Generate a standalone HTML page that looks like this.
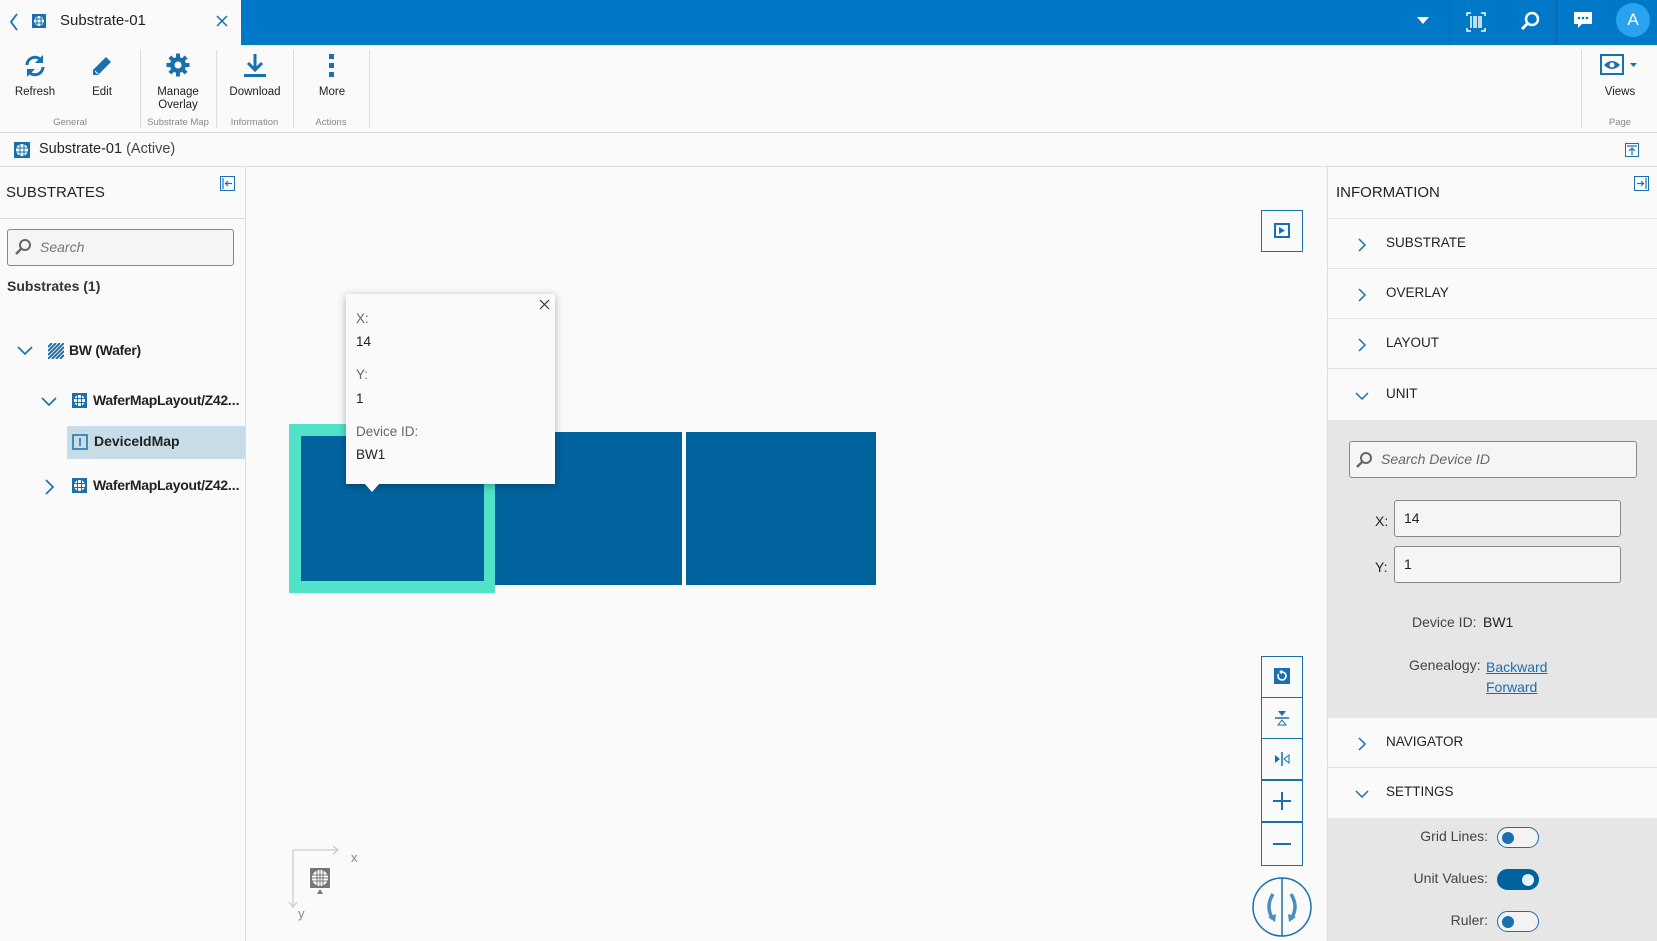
<!DOCTYPE html>
<html><head><meta charset="utf-8">
<style>
*{box-sizing:border-box;margin:0;padding:0}
body{width:1657px;height:941px;overflow:hidden;background:#fafafa;font-family:"Liberation Sans",sans-serif;color:#222;position:relative;font-size:14px}
.a{position:absolute}
.top{left:0;top:0;width:1657px;height:45px;background:#0078c8}
.tab{left:0;top:0;width:241px;height:45px;background:#fafafa}
.tb{left:0;top:45px;width:1657px;height:88px;background:#fafafa;border-bottom:1px solid #ddd}
.lbl{font-size:11.5px;color:#222;text-align:center;width:70px}
.grp{font-size:9.5px;color:#888;text-align:center}
.sep{width:1px;background:#ddd;top:50px;height:78px}
.ic{fill:#1a6fad}
.hdr{font-size:15px;color:#222}
.row{left:1327px;width:330px;height:50px;border-bottom:1px solid #e3e3e3}
.row span{position:absolute;left:59px;top:16px;font-size:13.5px;color:#222}
.row svg{position:absolute;left:30px;top:18px}
.gray{background:#e6e6e6}
.inp{background:#f5f5f5;border:1px solid #888;border-radius:3px}
.tog{width:42px;height:21px;border-radius:11px;border:1.5px solid #1a6fad;background:#f3f3f3}
.tog i{position:absolute;left:4px;top:3.5px;width:12px;height:12px;border-radius:50%;background:#1a6fad}
.tog.on{background:#00639e;border-color:#00639e}
.tog.on i{left:24px;background:#e8f4ff}
.cb{left:1261px;width:42px;height:42px;border:1.5px solid #1a6fad;background:#fafafa}
</style></head><body>
<div class="a top"></div>
<div class="a tab"></div>
<svg class="a" style="left:8px;top:12px" width="12" height="20"><path d="M9 2 L3 10 L9 18" stroke="#1a6fad" stroke-width="1.8" fill="none"/></svg>
<svg class="a" style="left:32px;top:14px" width="14" height="14"><rect width="14" height="14" fill="#1a6fad"/><circle cx="7" cy="7" r="5" fill="#fff"/><path d="M2 5h10M2 9h10M5 2v10M9 2v10" stroke="#1a6fad" stroke-width="1"/></svg>
<div class="a" style="left:60px;top:12px;font-size:15px">Substrate-01</div>
<svg class="a" style="left:216px;top:15px" width="12" height="12"><path d="M1 1L11 11M11 1L1 11" stroke="#1a6fad" stroke-width="1.5"/></svg>
<svg class="a" style="left:1417px;top:17px" width="12" height="8"><path d="M0 0h12L6 7z" fill="#fff"/></svg>
<div class="a" style="left:1449px;top:0;width:1px;height:45px;background:#0a66a8"></div>
<div class="a" style="left:1556px;top:0;width:1px;height:45px;background:#0a66a8"></div>
<svg class="a" style="left:1466px;top:12px" width="20" height="20"><path d="M1 4V1h4M15 1h4v3M1 16v3h4M15 19h4v-3" stroke="#fff" stroke-width="1.5" fill="none"/><path d="M5 4v12M8 4v12M10 4v12M13 4v12M15 4v12" stroke="#fff" stroke-width="1.5"/></svg>
<svg class="a" style="left:1519px;top:10px" width="22" height="22"><circle cx="13" cy="9" r="6" stroke="#fff" stroke-width="2.5" fill="none"/><path d="M9 13L3 19" stroke="#fff" stroke-width="3"/></svg>
<svg class="a" style="left:1573px;top:11px" width="20" height="20"><path d="M1 1h18v12H9l-4 4v-4H1z" fill="#fff"/><circle cx="6" cy="7" r="1.3" fill="#0078c8"/><circle cx="10" cy="7" r="1.3" fill="#0078c8"/><circle cx="14" cy="7" r="1.3" fill="#0078c8"/></svg>
<div class="a" style="left:1616px;top:3px;width:34px;height:34px;border-radius:50%;background:#29a3f0;color:#fff;font-size:17px;text-align:center;line-height:34px">A</div>

<div class="a tb"></div>
<!-- toolbar icons -->
<svg class="a" style="left:23px;top:54px" width="24" height="24" viewBox="0 0 24 24"><path d="M4 11a8 8 0 0 1 14-5" stroke="#1a6fad" stroke-width="3" fill="none"/><path d="M20 1v8h-8z" fill="#1a6fad"/><path d="M20 13a8 8 0 0 1-14 5" stroke="#1a6fad" stroke-width="3" fill="none"/><path d="M4 23v-8h8z" fill="#1a6fad"/></svg>
<svg class="a" style="left:90px;top:54px" width="24" height="24"><path d="M3 16L16 3l5 5L8 21H3z" fill="#1a6fad"/><path d="M5 17l3 3" stroke="#fff" stroke-width="1"/></svg>
<svg class="a" style="left:166px;top:53px" width="24" height="24" viewBox="0 0 24 24"><g fill="#1a6fad"><circle cx="12" cy="12" r="8"/><rect x="10" y="0.5" width="4" height="23"/><rect x="0.5" y="10" width="23" height="4"/><rect x="10" y="0.5" width="4" height="23" transform="rotate(45 12 12)"/><rect x="10" y="0.5" width="4" height="23" transform="rotate(-45 12 12)"/></g><circle cx="12" cy="12" r="3.5" fill="#fafafa"/></svg>
<svg class="a" style="left:243px;top:53px" width="24" height="26"><path d="M12 1v15" stroke="#1a6fad" stroke-width="3"/><path d="M5 10l7 7 7-7" stroke="#1a6fad" stroke-width="3" fill="none"/><rect x="1" y="21" width="22" height="3" fill="#1a6fad"/></svg>
<svg class="a" style="left:326px;top:54px" width="12" height="24"><rect x="3" y="0" width="5" height="5" fill="#1a6fad"/><rect x="3" y="9" width="5" height="5" fill="#1a6fad"/><rect x="3" y="18" width="5" height="5" fill="#1a6fad"/></svg>
<div class="a lbl" style="left:0;top:86px">Refresh</div>
<div class="a lbl" style="left:67px;top:86px">Edit</div>
<div class="a lbl" style="left:143px;top:86px;line-height:13px">Manage<br>Overlay</div>
<div class="a lbl" style="left:220px;top:86px">Download</div>
<div class="a lbl" style="left:297px;top:86px">More</div>
<div class="a grp" style="left:0;top:117px;width:140px">General</div>
<div class="a grp" style="left:140px;top:117px;width:76px">Substrate Map</div>
<div class="a grp" style="left:216px;top:117px;width:77px">Information</div>
<div class="a grp" style="left:293px;top:117px;width:76px">Actions</div>
<div class="a sep" style="left:140px"></div><div class="a sep" style="left:216px"></div><div class="a sep" style="left:293px"></div><div class="a sep" style="left:369px"></div><div class="a sep" style="left:1581px"></div>
<svg class="a" style="left:1600px;top:54px" width="40" height="22"><rect x="1" y="1" width="22" height="19" fill="none" stroke="#1a6fad" stroke-width="2"/><path d="M4 11q8-8 16 0q-8 8-16 0z" fill="#1a6fad"/><circle cx="12" cy="11" r="2.5" fill="#fff"/><path d="M30 9h7l-3.5 4z" fill="#1a6fad"/></svg>
<div class="a lbl" style="left:1585px;top:86px">Views</div>
<div class="a grp" style="left:1585px;top:117px;width:70px">Page</div>

<!-- breadcrumb -->
<svg class="a" style="left:14px;top:142px" width="16" height="16"><rect width="16" height="16" fill="#1a6fad"/><circle cx="8" cy="8" r="6" fill="#fff"/><path d="M2 6h12M2 10h12M6 2v12M10 2v12" stroke="#1a6fad" stroke-width="1"/></svg>
<div class="a" style="left:39px;top:141px;font-size:14.5px">Substrate-01 <span style="color:#444">(Active)</span></div>
<svg class="a" style="left:1625px;top:143px" width="14" height="14"><rect x=".5" y=".5" width="13" height="13" fill="#fff" stroke="#1a6fad"/><path d="M2 3h10M7 12V5M4 8l3-3 3 3" stroke="#1a6fad" stroke-width="1.2" fill="none"/></svg>
<div class="a" style="left:0;top:166px;width:1657px;height:1px;background:#ddd"></div>

<!-- left panel -->
<div class="a" style="left:245px;top:167px;width:1px;height:774px;background:#ddd"></div>
<div class="a hdr" style="left:6px;top:184px">SUBSTRATES</div>
<svg class="a" style="left:220px;top:176px" width="15" height="15"><rect x=".5" y=".5" width="14" height="14" fill="#fff" stroke="#1a6fad"/><path d="M3 2v11M12 7.5H6M8 5L5.5 7.5 8 10" stroke="#1a6fad" stroke-width="1.2" fill="none"/></svg>
<div class="a" style="left:0;top:218px;width:245px;height:1px;background:#ddd"></div>
<div class="a inp" style="left:7px;top:229px;width:227px;height:37px"></div>
<svg class="a" style="left:14px;top:238px" width="18" height="18"><circle cx="11" cy="7" r="5" stroke="#666" stroke-width="2" fill="none"/><path d="M7 11L2 16" stroke="#666" stroke-width="2.5"/></svg>
<div class="a" style="left:40px;top:239px;font-style:italic;color:#777;font-size:14px">Search</div>
<div class="a" style="left:7px;top:278px;font-weight:bold;color:#333;font-size:14px">Substrates (1)</div>
<svg class="a" style="left:17px;top:346px" width="16" height="10"><path d="M1 1l7 7 7-7" stroke="#1a6fad" stroke-width="1.6" fill="none"/></svg>
<svg class="a" style="left:48px;top:343px" width="16" height="16"><rect width="16" height="16" fill="#fff"/><path d="M0 4L4 0M0 8L8 0M0 12L12 0M0 16L16 0M4 16L16 4M8 16L16 8M12 16L16 12" stroke="#1a6fad" stroke-width="2"/></svg>
<div class="a" style="left:69px;top:342px;font-weight:bold;font-size:14px;letter-spacing:-.3px">BW (Wafer)</div>
<svg class="a" style="left:41px;top:397px" width="16" height="10"><path d="M1 1l7 7 7-7" stroke="#1a6fad" stroke-width="1.6" fill="none"/></svg>
<svg class="a" style="left:72px;top:393px" width="15" height="15"><rect width="15" height="15" fill="#1a6fad"/><circle cx="7.5" cy="7.5" r="5.5" fill="#fff"/><path d="M2 5.5h11M2 9.5h11M5.5 2v11M9.5 2v11" stroke="#1a6fad" stroke-width="1"/></svg>
<div class="a" style="left:93px;top:392px;font-weight:bold;font-size:14px;letter-spacing:-.3px">WaferMapLayout/Z42<span style="letter-spacing:0">...</span></div>
<div class="a" style="left:67px;top:426px;width:178px;height:33px;background:#c8dce8"></div>
<svg class="a" style="left:72px;top:434px" width="16" height="16"><rect x="1" y="1" width="14" height="14" fill="none" stroke="#1a6fad" stroke-width="1.5"/><path d="M8 4v8" stroke="#1a6fad" stroke-width="1.5"/></svg>
<div class="a" style="left:94px;top:433px;font-weight:bold;font-size:14px">DeviceIdMap</div>
<svg class="a" style="left:45px;top:479px" width="10" height="16"><path d="M1 1l7 7-7 7" stroke="#1a6fad" stroke-width="1.6" fill="none"/></svg>
<svg class="a" style="left:72px;top:478px" width="15" height="15"><rect width="15" height="15" fill="#1a6fad"/><circle cx="7.5" cy="7.5" r="5.5" fill="#fff"/><path d="M2 5.5h11M2 9.5h11M5.5 2v11M9.5 2v11" stroke="#1a6fad" stroke-width="1"/></svg>
<div class="a" style="left:93px;top:477px;font-weight:bold;font-size:14px;letter-spacing:-.3px">WaferMapLayout/Z42<span style="letter-spacing:0">...</span></div>

<!-- map -->
<div class="a" style="left:289px;top:424px;width:206px;height:169px;background:#50e3c8"></div>
<div class="a" style="left:301px;top:436px;width:183px;height:145px;background:#00639e"></div>
<div class="a" style="left:495px;top:432px;width:187px;height:153px;background:#00639e"></div>
<div class="a" style="left:686px;top:432px;width:190px;height:153px;background:#00639e"></div>
<div class="a" style="left:346px;top:294px;width:209px;height:190px;background:#fafafa;box-shadow:0 2px 8px rgba(0,0,0,.3)"></div>
<div class="a" style="left:364px;top:483px;width:0;height:0;border-left:8px solid transparent;border-right:8px solid transparent;border-top:9px solid #fafafa"></div>
<svg class="a" style="left:539px;top:299px" width="11" height="11"><path d="M1 1l9 9M10 1l-9 9" stroke="#333" stroke-width="1.2"/></svg>
<div class="a" style="left:356px;top:311px;color:#666;font-size:13.5px">X:</div>
<div class="a" style="left:356px;top:334px;font-size:13.5px">14</div>
<div class="a" style="left:356px;top:367px;color:#666;font-size:13.5px">Y:</div>
<div class="a" style="left:356px;top:391px;font-size:13.5px">1</div>
<div class="a" style="left:356px;top:424px;color:#666;font-size:13.5px">Device ID:</div>
<div class="a" style="left:356px;top:447px;font-size:13.5px">BW1</div>

<div class="a cb" style="top:210px;height:42px"><svg style="position:absolute;left:12px;top:12px" width="16" height="15"><rect x="1" y="1" width="14" height="13" fill="none" stroke="#1a6fad" stroke-width="2"/><path d="M5 4v7l6-3.5z" fill="#1a6fad"/></svg></div>
<div class="a cb" style="top:656px"><svg style="position:absolute;left:12px;top:11px" width="16" height="16"><rect width="16" height="16" fill="#1a6fad"/><path d="M4.5 6a4 4 0 1 0 3-2" stroke="#fff" stroke-width="1.6" fill="none"/><path d="M8 1.5v5l-3-2.5z" fill="#fff"/></svg></div>
<div class="a cb" style="top:697px"><svg style="position:absolute;left:12px;top:12px" width="16" height="16"><path d="M4 1h8L8 6z" fill="#1a6fad"/><path d="M1 8h14" stroke="#1a6fad" stroke-width="1.5"/><path d="M4 15h8L8 10z" fill="none" stroke="#1a6fad"/></svg></div>
<div class="a cb" style="top:738px"><svg style="position:absolute;left:12px;top:12px" width="16" height="16"><path d="M1 4v8l5-4z" fill="#1a6fad"/><path d="M8 1v14" stroke="#1a6fad" stroke-width="1.5"/><path d="M15 4v8l-5-4z" fill="none" stroke="#1a6fad"/></svg></div>
<div class="a cb" style="top:780px"><svg style="position:absolute;left:10px;top:10px" width="20" height="20"><path d="M10 1v18M1 10h18" stroke="#1a6fad" stroke-width="2"/></svg></div>
<div class="a cb" style="top:822px;height:44px"><svg style="position:absolute;left:10px;top:11px" width="20" height="20"><path d="M1 10h18" stroke="#1a6fad" stroke-width="2"/></svg></div>
<svg class="a" style="left:1251px;top:876px" width="62" height="62"><circle cx="31" cy="31" r="29" fill="#fafafa" stroke="#1a6fad" stroke-width="1.5"/><path d="M31 2v58" stroke="#1a6fad" stroke-width="1.5"/><path d="M22 18q-8 13 0 25" stroke="#4a8fc0" stroke-width="3.5" fill="none"/><path d="M17 41l7 5 1-8z" fill="#4a8fc0"/><path d="M40 18q8 13 0 25" stroke="#4a8fc0" stroke-width="3.5" fill="none"/><path d="M45 41l-7 5-1-8z" fill="#4a8fc0"/></svg>

<svg class="a" style="left:285px;top:842px" width="80" height="80"><path d="M8 64V8h45" stroke="#ccc" stroke-width="1.3" fill="none"/><path d="M48 4l5 4-5 4M4 60l4 5 4-5" stroke="#ccc" stroke-width="1.3" fill="none"/><rect x="25" y="26" width="20" height="20" fill="#777"/><circle cx="35" cy="36" r="8" fill="#fff"/><path d="M27 33h16M27 36h16M27 39h16M32 28v16M35 28v16M38 28v16" stroke="#777" stroke-width="1"/><path d="M35 47l-3 5h6z" fill="#777"/><text x="66" y="20" font-size="13" fill="#888" font-family="Liberation Sans">x</text><text x="13" y="76" font-size="13" fill="#888" font-family="Liberation Sans">y</text></svg>

<!-- right panel -->
<div class="a" style="left:1327px;top:167px;width:1px;height:774px;background:#ddd"></div>
<div class="a hdr" style="left:1336px;top:184px">INFORMATION</div>
<svg class="a" style="left:1634px;top:176px" width="15" height="15"><rect x=".5" y=".5" width="14" height="14" fill="#fff" stroke="#1a6fad"/><path d="M12 2v11M3 7.5h6M7 5l2.5 2.5L7 10" stroke="#1a6fad" stroke-width="1.2" fill="none"/></svg>
<div class="a" style="left:1328px;top:218px;width:329px;height:1px;background:#e3e3e3"></div>
<div class="a row" style="top:219px"><svg width="10" height="16"><path d="M2 2l6 6-6 6" stroke="#1a6fad" stroke-width="1.5" fill="none"/></svg><span>SUBSTRATE</span></div>
<div class="a row" style="top:269px"><svg width="10" height="16"><path d="M2 2l6 6-6 6" stroke="#1a6fad" stroke-width="1.5" fill="none"/></svg><span>OVERLAY</span></div>
<div class="a row" style="top:319px"><svg width="10" height="16"><path d="M2 2l6 6-6 6" stroke="#1a6fad" stroke-width="1.5" fill="none"/></svg><span>LAYOUT</span></div>
<div class="a row" style="top:370px;border:none"><svg width="16" height="16" style="left:27px;top:20px"><path d="M2 3l6 6 6-6" stroke="#1a6fad" stroke-width="1.5" fill="none"/></svg><span>UNIT</span></div>
<div class="a gray" style="left:1328px;top:420px;width:329px;height:298px"></div>
<div class="a inp" style="left:1349px;top:441px;width:288px;height:37px"></div>
<svg class="a" style="left:1355px;top:451px" width="18" height="18"><circle cx="11" cy="7" r="5" stroke="#666" stroke-width="2" fill="none"/><path d="M7 11L2 16" stroke="#666" stroke-width="2.5"/></svg>
<div class="a" style="left:1381px;top:451px;font-style:italic;color:#666;font-size:14px">Search Device ID</div>
<div class="a" style="left:1375px;top:513px;font-size:14px">X:</div>
<div class="a inp" style="left:1394px;top:500px;width:227px;height:37px"></div>
<div class="a" style="left:1404px;top:510px;font-size:14px">14</div>
<div class="a" style="left:1375px;top:559px;font-size:14px">Y:</div>
<div class="a inp" style="left:1394px;top:546px;width:227px;height:37px"></div>
<div class="a" style="left:1404px;top:556px;font-size:14px">1</div>
<div class="a" style="left:1412px;top:614px;color:#444;font-size:14px">Device ID:</div>
<div class="a" style="left:1483px;top:614px;font-size:14px">BW1</div>
<div class="a" style="left:1409px;top:657px;color:#444;font-size:14px">Genealogy:</div>
<div class="a" style="left:1486px;top:657px;color:#1a6fad;text-decoration:underline;font-size:14px;line-height:20px">Backward<br>Forward</div>
<div class="a row" style="top:718px"><svg width="10" height="16"><path d="M2 2l6 6-6 6" stroke="#1a6fad" stroke-width="1.5" fill="none"/></svg><span>NAVIGATOR</span></div>
<div class="a row" style="top:768px;border:none"><svg width="16" height="16" style="left:27px;top:20px"><path d="M2 3l6 6 6-6" stroke="#1a6fad" stroke-width="1.5" fill="none"/></svg><span>SETTINGS</span></div>
<div class="a gray" style="left:1328px;top:818px;width:329px;height:123px"></div>
<div class="a" style="left:1350px;top:828px;width:138px;text-align:right;color:#444;font-size:14px">Grid Lines:</div>
<div class="a tog" style="left:1497px;top:827px"><i></i></div>
<div class="a" style="left:1350px;top:870px;width:138px;text-align:right;color:#444;font-size:14px">Unit Values:</div>
<div class="a tog on" style="left:1497px;top:869px"><i></i></div>
<div class="a" style="left:1350px;top:912px;width:138px;text-align:right;color:#444;font-size:14px">Ruler:</div>
<div class="a tog" style="left:1497px;top:911px"><i></i></div>
</body></html>
